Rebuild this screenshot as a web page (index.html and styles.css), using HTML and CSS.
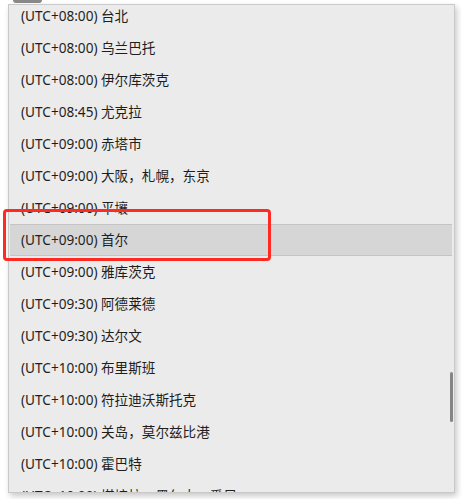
FILE: index.html
```html
<!DOCTYPE html>
<html>
<head>
<meta charset="utf-8">
<link rel="stylesheet" href="styles.css">
</head>
<body>
<div class="stage">
  <div class="tab"></div>
  <div class="panel">
    <ul class="list">
      <li class="row">(UTC+08:00) 台北</li>
      <li class="row">(UTC+08:00) 乌兰巴托</li>
      <li class="row">(UTC+08:00) 伊尔库茨克</li>
      <li class="row">(UTC+08:45) 尤克拉</li>
      <li class="row">(UTC+09:00) 赤塔市</li>
      <li class="row">(UTC+09:00) 大阪，札幌，东京</li>
      <li class="row">(UTC+09:00) 平壤</li>
      <li class="row selected">(UTC+09:00) 首尔</li>
      <li class="row">(UTC+09:00) 雅库茨克</li>
      <li class="row">(UTC+09:30) 阿德莱德</li>
      <li class="row">(UTC+09:30) 达尔文</li>
      <li class="row">(UTC+10:00) 布里斯班</li>
      <li class="row">(UTC+10:00) 符拉迪沃斯托克</li>
      <li class="row">(UTC+10:00) 关岛，莫尔兹比港</li>
      <li class="row">(UTC+10:00) 霍巴特</li>
      <li class="row">(UTC+10:00) 堪培拉，墨尔本，悉尼</li>
    </ul>
    <div class="scrollbar"></div>
  </div>
  <div class="annot"></div>
</div>
</body>
</html>
```
FILE: styles.css
```css
html, body {
  margin: 0;
  padding: 0;
  background: #ffffff;
  overflow: hidden;
}
.stage {
  position: relative;
  width: 462px;
  height: 499px;
  padding: 4px 0 0 8px;
  box-sizing: border-box;
}
.tab {
  position: absolute;
  left: 13px;
  top: 0;
  width: 29px;
  height: 3px;
  background: #8a8a8a;
  border-radius: 0 0 3px 3px;
}
.panel {
  position: relative;
  width: 447px;
  height: 489px;
  box-sizing: border-box;
  background: #ebebeb;
  border: 1px solid #c9c9c9;
  overflow: hidden;
  box-shadow: 2px 3px 6px rgba(0, 0, 0, 0.22);
}
.list {
  list-style: none;
  margin: -5px 0 0 0;
  padding: 0;
}
.row {
  height: 32px;
  line-height: 32px;
  padding-left: 11px;
  margin-left: 1px;
  margin-right: 2px;
  font-family: "Noto Sans", "Noto Sans CJK SC", sans-serif;
  font-size: 13.6px;
  color: #1e1e1e;
  white-space: nowrap;
}
.row.selected {
  background: #d6d6d6;
  box-shadow: inset 0 1px 0 #c4c4c4, inset 0 -1px 0 #c4c4c4;
}
.scrollbar {
  position: absolute;
  right: 1px;
  top: 367px;
  width: 3px;
  height: 50px;
  background: #858585;
  border-radius: 2px;
}
.annot {
  position: absolute;
  left: 3px;
  top: 209px;
  width: 268px;
  height: 52px;
  box-sizing: border-box;
  border: 3px solid #ff2a22;
  border-radius: 4px;
}
```
